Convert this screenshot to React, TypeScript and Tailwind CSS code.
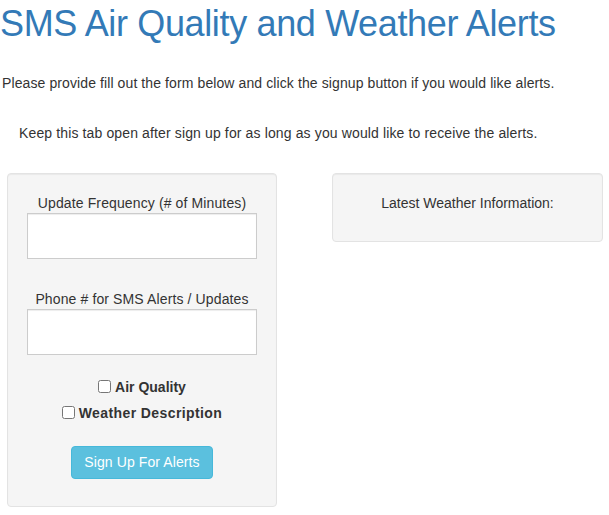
import React from "react";

const font = "font-['Liberation_Sans',Arial,sans-serif]";

function Field({ label, className }: { label: string; className?: string }) {
  return (
    <div className={`flex flex-col items-center ${className ?? ""}`}>
      <label className="text-[14px] leading-[20px] tracking-[0.12px] text-[#333]">{label}</label>
      <input
        type="text"
        className="w-[230px] h-[46px] bg-white border border-[#ccc] shadow-[inset_0_1px_1px_rgba(0,0,0,0.075)] outline-none px-3"
      />
    </div>
  );
}

function Check({ label, wide }: { label: string; wide?: boolean }) {
  return (
    <label className="flex items-center gap-[4px] text-[14px] leading-[20px] font-bold text-[#333]">
      <input type="checkbox" className="w-[13px] h-[13px] m-0" />
      <span className={wide ? "tracking-[0.4px]" : ""}>{label}</span>
    </label>
  );
}

export default function App() {
  return (
    <div className={`${font} w-[609px] h-[515px] bg-white text-[#333] overflow-hidden`}>
      <h1 className="text-[36px] leading-[1.1] tracking-[-0.35px] text-[#337ab7] mt-[4px]">
        SMS Air Quality and Weather Alerts
      </h1>
      <p className="text-[14px] leading-[20px] tracking-[0.1px] mt-[29px] ml-[2px]">
        Please provide fill out the form below and click the signup button if you would like alerts.
      </p>
      <p className="text-[14px] leading-[20px] tracking-[0.13px] mt-[30px] ml-[19px]">
        Keep this tab open after sign up for as long as you would like to receive the alerts.
      </p>

      <div className="flex items-start gap-[55px] ml-[7px] mt-[30px]">
        <div className="w-[270px] h-[334px] bg-[#f5f5f5] border border-[#e3e3e3] rounded-[4px] shadow-[inset_0_1px_1px_rgba(0,0,0,0.05)] pt-[19px] flex flex-col items-center">
          <Field label="Update Frequency (# of Minutes)" />
          <Field label="Phone # for SMS Alerts / Updates" className="mt-[30px]" />
          <div className="flex flex-col items-center gap-[6px] mt-[22px]">
            <Check label="Air Quality" />
            <Check label="Weather Description" wide />
          </div>
          <button className="mt-[23px] h-[33px] px-[12px] bg-[#5bc0de] border border-[#46b8da] rounded-[4px] text-white text-[14px] leading-[20px] tracking-[0.1px]">
            Sign Up For Alerts
          </button>
        </div>

        <div className="w-[271px] h-[69px] bg-[#f5f5f5] border border-[#e3e3e3] rounded-[4px] shadow-[inset_0_1px_1px_rgba(0,0,0,0.05)] pt-[17px] text-center">
          <span className="text-[14px] leading-[20px]">Latest Weather Information:</span>
        </div>
      </div>
    </div>
  );
}
